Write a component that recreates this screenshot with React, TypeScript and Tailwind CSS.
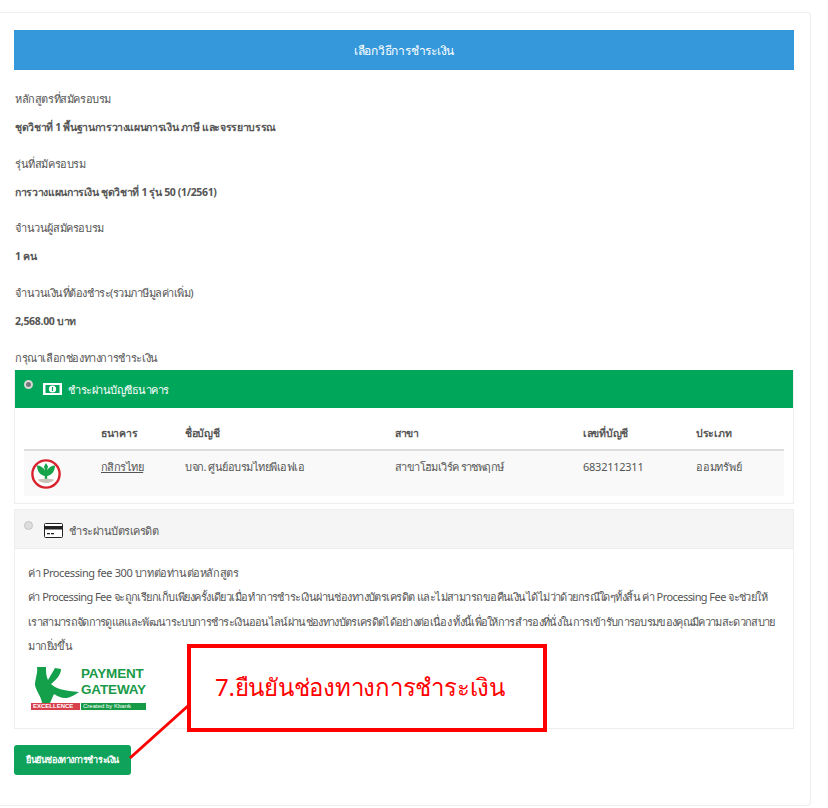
export default function App() {
  return (
    <div className="relative h-[808px] w-[828px] overflow-hidden bg-white font-['Noto_Sans',sans-serif] text-[11px] tracking-[-0.4px] text-[#555]">
      <div className="mt-3 h-[794px] w-[811px] rounded-r-sm border-t border-r border-b border-[#eeeeee] pt-[17px] pl-[14px] pr-[16px]">
        <div className="flex h-10 w-[780px] items-center justify-center bg-[#3498db] pt-[1px] text-[12px] tracking-[-0.25px] text-white">เลือกวิธีการชำระเงิน</div>
        <div className="mt-[20px] flex h-[18px] items-center pl-px">หลักสูตรที่สมัครอบรม</div>
        <div className="mt-[11px] flex h-[18px] items-center pl-px text-[10.5px] font-bold tracking-[-0.35px]">ชุดวิชาที่ 1 พื้นฐานการวางแผนการเงิน ภาษี และจรรยาบรรณ</div>
        <div className="mt-[18px] flex h-[18px] items-center pl-px">รุ่นที่สมัครอบรม</div>
        <div className="mt-[11px] flex h-[18px] items-center pl-px text-[10.5px] font-bold tracking-[-0.35px]">การวางแผนการเงิน ชุดวิชาที่ 1 รุ่น 50 (1/2561)</div>
        <div className="mt-[17px] flex h-[18px] items-center pl-px">จำนวนผู้สมัครอบรม</div>
        <div className="mt-[11px] flex h-[18px] items-center pl-px text-[10.5px] font-bold tracking-[-0.35px]">1 คน</div>
        <div className="mt-[18px] flex h-[18px] items-center pl-px tracking-[-0.5px]">จำนวนเงินที่ต้องชำระ(รวมภาษีมูลค่าเพิ่ม)</div>
        <div className="mt-[11px] flex h-[18px] items-center pl-px text-[10.5px] font-bold tracking-[-0.3px]">2,568.00 บาท</div>
        <div className="mt-[18px] flex h-[18px] items-center pl-px">กรุณาเลือกช่องทางการชำระเงิน</div>

        <div className="mt-[3px] w-[780px] border border-t-0 border-[#eeeeee]">
          <div className="flex h-[38px] items-center bg-[#00a65a] text-white">
            <span className="mb-[10px] ml-[9px] h-[9px] w-[9px] rounded-full border-2 border-[#d8d8d8] bg-[#777]" />
            <svg className="ml-[10px]" width="19" height="12" viewBox="0 0 19 12">
              <rect width="19" height="12" fill="#fff" />
              <rect x="2.5" y="2" width="14" height="8" fill="#00a65a" />
              <circle cx="9.5" cy="6" r="3.6" fill="#fff" />
              <rect x="8.9" y="4" width="1.2" height="4" fill="#00a65a" />
            </svg>
            <span className="mt-[3px] ml-[6px] tracking-[-0.5px]">ชำระผ่านบัญชีธนาคาร</span>
          </div>
          <div className="px-[9px] pb-[7px]">
            <div className="flex h-[43px] items-center border-b-2 border-[#dddddd] pt-[10px] text-[10.5px] font-bold tracking-[-0.3px]">
              <span className="ml-[77px] w-[84px]">ธนาคาร</span>
              <span className="w-[210px]">ชื่อบัญชี</span>
              <span className="w-[188px]">สาขา</span>
              <span className="w-[113px]">เลขที่บัญชี</span>
              <span>ประเภท</span>
            </div>
            <div className="flex h-[45px] bg-[#f9f9f9]">
              <svg className="mt-[8px] ml-[7px]" width="30" height="30" viewBox="0 0 30 30">
                <circle cx="15" cy="15" r="13.6" fill="#fff" stroke="#d8232f" strokeWidth="2.4" />
                <path d="M6 6.5 C9.5 6.5 12.5 8.5 14 11.5 L13 7.5 L15 4 L17 7.5 L16 11.5 C17.5 8.5 20.5 6.5 24 6.5 C24 12 21 16 16.2 17 L16.2 21 L13.8 21 L13.8 17 C9 16 6 12 6 6.5Z" fill="#16a34a" />
                <path d="M7 20.5 C11 19.5 19 19.5 23 20.5 C21 25 9 25 7 20.5Z" fill="#c8c2b8" />
              </svg>
              <span className="mt-[8px] ml-[40px] w-[84px] tracking-[-0.55px] underline">กสิกรไทย</span>
              <span className="mt-[8px] w-[210px] tracking-[-0.5px]">บจก. ศูนย์อบรมไทยพีเอฟเอ</span>
              <span className="mt-[8px] w-[188px] tracking-[-0.6px]">สาขาโฮมเวิร์ค ราชพฤกษ์</span>
              <span className="mt-[8px] w-[113px] tracking-[-0.25px]">6832112311</span>
              <span className="mt-[8px] tracking-[-0.25px]">ออมทรัพย์</span>
            </div>
          </div>
        </div>

        <div className="mt-[5px] w-[780px] border border-[#eeeeee]">
          <div className="flex h-[39px] items-center border-b border-[#eeeeee] bg-[#f5f5f5]">
            <span className="mb-[8px] ml-[9px] h-[9px] w-[9px] rounded-full border border-[#c4c4c4] bg-[#dddddd]" />
            <svg className="mt-[2px] ml-[11px]" width="19" height="15" viewBox="0 0 19 15">
              <rect x="0.5" y="0.5" width="18" height="14" rx="1" fill="#fff" stroke="#222" />
              <rect x="0.5" y="3" width="18" height="3.5" fill="#222" />
              <rect x="3" y="10" width="3" height="1.3" fill="#222" />
              <rect x="7" y="10" width="3" height="1.3" fill="#222" />
            </svg>
            <span className="mt-[4px] ml-[6px] tracking-[-0.5px]">ชำระผ่านบัตรเครดิต</span>
          </div>
          <div className="h-[179px] pt-[12px] pl-[13px] leading-[24.3px]">
            <p>ค่า Processing fee 300 บาทต่อท่านต่อหลักสูตร</p>
            <p className="whitespace-nowrap tracking-[-0.56px]">ค่า Processing Fee จะถูกเรียกเก็บเพียงครั้งเดียวเมื่อทำการชำระเงินผ่านช่องทางบัตรเครดิต และไม่สามารถขอคืนเงินได้ไม่ว่าด้วยกรณีใดๆทั้งสิ้น ค่า Processing Fee จะช่วยให้</p>
            <p className="whitespace-nowrap tracking-[-0.68px]">เราสามารถจัดการดูแลและพัฒนาระบบการชำระเงินออนไลน์ผ่านช่องทางบัตรเครดิตได้อย่างต่อเนื่อง ทั้งนี้เพื่อให้การสำรองที่นั่งในการเข้ารับการอบรมของคุณมีความสะดวกสบาย</p>
            <p>มากยิ่งขึ้น</p>
            <div className="mt-[8px] ml-[3px] w-[115px]">
              <div className="flex h-[37px] items-start tracking-normal">
                <svg className="ml-[3px] shrink-0" width="46" height="37" viewBox="0 0 46 37">
                  <path d="M3 1 L12 1 C12 6 12 10 14 14 L21 2 L27 3 C27 9 22 14 17 18 C22 23 31 25 45 26 C39 30 35 32 31 32 C27 32 23 30 20 28 L16 37 L8 37 C7 30 2 25 1 19 C1 13 4 7 3 1Z" fill="#14a04a" />
                </svg>
                <div className="ml-px font-['Liberation_Sans',sans-serif] text-[13.5px] leading-[16px] font-bold tracking-[-0.15px] text-[#1a9a48]">
                  <div>PAYMENT</div>
                  <div>GATEWAY</div>
                </div>
              </div>
              <div className="flex h-[7px] font-['Liberation_Sans',sans-serif] text-[6px] leading-[7px] font-bold tracking-normal text-white">
                <span className="w-[49px] bg-[#d8404c] pl-[2px]">EXCELLENCE</span>
                <span className="ml-px flex-1 bg-[#169a45] pl-[2px] font-normal">Created by Kbank</span>
              </div>
            </div>
          </div>
        </div>

        <button className="mt-[16px] flex h-[30px] w-[117px] items-center justify-center rounded-[3px] bg-[#0fa25a] text-[9px] font-bold tracking-[-0.45px] text-white">ยืนยันช่องทางการชำระเงิน</button>
      </div>

      <div className="absolute top-[644px] left-[187px] flex h-[88px] w-[360px] items-start border-4 border-[#ff0000] bg-white pt-[22px] pl-[24px] text-[24px] leading-[34px] tracking-[-0.25px] text-[#ff0000]">7.ยืนยันช่องทางการชำระเงิน</div>
      <svg className="absolute top-[700px] left-[125px]" width="70" height="64" viewBox="0 0 70 64">
        <line x1="5" y1="58" x2="64" y2="5" stroke="#ff0000" strokeWidth="3" />
      </svg>
    </div>
  );
}
